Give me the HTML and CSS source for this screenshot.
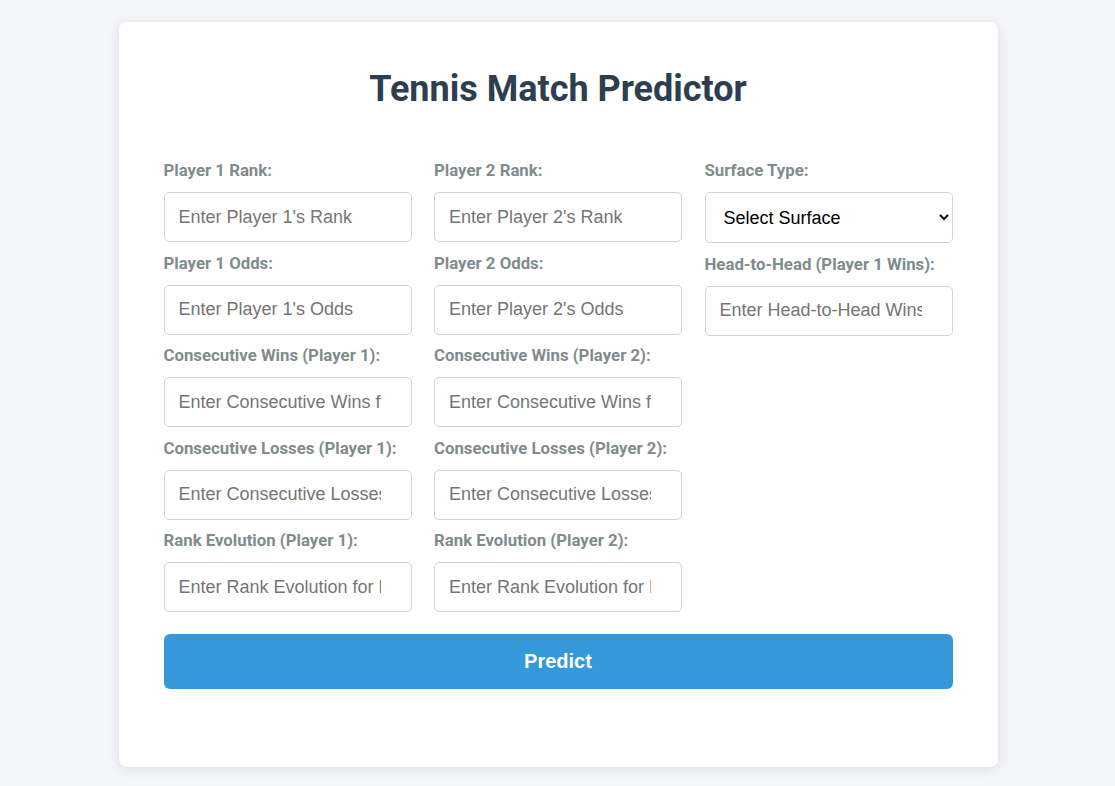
FILE: index.html
```html
<!DOCTYPE html>
<html lang="en">
<head>
<meta charset="utf-8">
<title>Tennis Match Predictor</title>
<link rel="stylesheet" href="styles.css">
</head>
<body>
<div class="card">
  <h1 class="title">Tennis Match Predictor</h1>
  <form class="form">
    <div class="grid">
      <div class="col">
        <div class="group"><label class="label">Player 1 Rank:</label><input class="field" type="text" placeholder="Enter Player 1's Rank"></div>
        <div class="group"><label class="label">Player 1 Odds:</label><input class="field" type="text" placeholder="Enter Player 1's Odds"></div>
        <div class="group"><label class="label">Consecutive Wins (Player 1):</label><input class="field" type="text" placeholder="Enter Consecutive Wins for Player 1"></div>
        <div class="group"><label class="label">Consecutive Losses (Player 1):</label><input class="field" type="text" placeholder="Enter Consecutive Losses for Player 1"></div>
        <div class="group"><label class="label">Rank Evolution (Player 1):</label><input class="field" type="text" placeholder="Enter Rank Evolution for Player 1"></div>
      </div>
      <div class="col">
        <div class="group"><label class="label">Player 2 Rank:</label><input class="field" type="text" placeholder="Enter Player 2's Rank"></div>
        <div class="group"><label class="label">Player 2 Odds:</label><input class="field" type="text" placeholder="Enter Player 2's Odds"></div>
        <div class="group"><label class="label">Consecutive Wins (Player 2):</label><input class="field" type="text" placeholder="Enter Consecutive Wins for Player 2"></div>
        <div class="group"><label class="label">Consecutive Losses (Player 2):</label><input class="field" type="text" placeholder="Enter Consecutive Losses for Player 2"></div>
        <div class="group"><label class="label">Rank Evolution (Player 2):</label><input class="field" type="text" placeholder="Enter Rank Evolution for Player 2"></div>
      </div>
      <div class="col">
        <div class="group"><label class="label">Surface Type:</label>
          <select class="field select">
            <option>Select Surface</option>
            <option>Hard</option>
            <option>Clay</option>
            <option>Grass</option>
          </select>
        </div>
        <div class="group"><label class="label">Head-to-Head (Player 1 Wins):</label><input class="field" type="text" placeholder="Enter Head-to-Head Wins"></div>
      </div>
    </div>
    <button class="btn" type="button">Predict</button>
  </form>
</div>
</body>
</html>
```

FILE: styles.css
```css
html, body {
  margin: 0;
  padding: 0;
}
body {
  background: #f4f5f9;
  font-family: Roboto, "Liberation Sans", Arial, sans-serif;
  min-height: 100vh;
  box-sizing: border-box;
  padding-top: 22px;
  display: flex;
  align-items: flex-start;
  justify-content: center;
}
.card {
  width: 789px;
  background: #ffffff;
  border-radius: 8px;
  box-shadow: 0 2px 12px rgba(0, 0, 0, 0.1);
  padding: 40px 45px 78px;
  margin-left: 1px;
}
.title {
  margin: 0 0 50px;
  padding-top: 6px;
  text-align: center;
  color: #2c3e50;
  font-size: 36px;
  font-weight: 700;
  line-height: 42px;
}
.form {
  display: flex;
  flex-direction: column;
  gap: 22px;
}
.grid {
  display: grid;
  grid-template-columns: repeat(3, 1fr);
  column-gap: 22.5px;
}
.col {
  display: flex;
  flex-direction: column;
  gap: 10.5px;
}
.group {
  display: flex;
  flex-direction: column;
}
.label {
  color: #7f8c8d;
  font-weight: 700;
  font-size: 16.8px;
  line-height: 20px;
  margin-bottom: 12px;
}
.field {
  box-sizing: border-box;
  width: 100%;
  height: 50px;
  padding: 0 30px 0 14px;
  border: 1px solid #cfd3dc;
  border-radius: 5px;
  font-family: "Liberation Sans", Arial, sans-serif;
  font-size: 18px;
  color: #000;
  background: #fff;
}
.field::placeholder {
  color: #757575;
}
.select {
  height: 51px;
  padding: 0 17px 0 14px;
}
.btn {
  height: 55px;
  border: none;
  border-radius: 6px;
  background: #3498db;
  color: #fff;
  font-family: "Liberation Sans", Arial, sans-serif;
  font-weight: 700;
  font-size: 20px;
  cursor: pointer;
}
```
